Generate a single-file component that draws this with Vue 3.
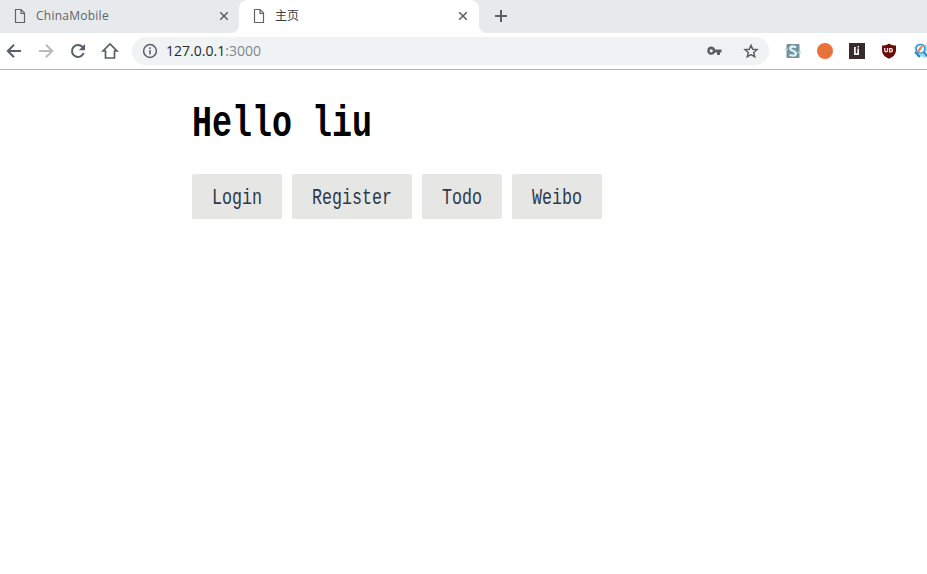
<script setup>
const links = ['Login', 'Register', 'Todo', 'Weibo']
const tabs = [
  { title: 'ChinaMobile', active: false },
  { title: '主页', active: true },
]
</script>

<template>
  <div class="browser">
    <div class="tabs">
      <div v-for="t in tabs" :key="t.title" class="tab" :class="{ active: t.active, idle: !t.active }">
        <svg class="doc" width="12" height="16" viewBox="0 0 12 16"><path d="M1.500 1.500h5.500l3.500 3.500v9.500h-9zM7 1.500v4h3.500" /></svg>
        <span class="title">{{ t.title }}</span>
        <svg class="close" width="10" height="10" viewBox="0 0 10 10"><path d="M1.200 1.200l7.600 7.600M8.800 1.200l-7.600 7.600" /></svg>
      </div>
      <div class="rest">
        <svg width="12" height="12" viewBox="0 0 12 12"><path d="M6 0v12M0 6h12" /></svg>
      </div>
    </div>

    <div class="toolbar">
      <div class="nav">
        <svg width="16" height="16" viewBox="0 0 16 16"><path d="M15 8H2M8 1.800L1.800 8L8 14.200" /></svg>
        <svg class="dim" width="16" height="16" viewBox="0 0 16 16"><path d="M1 8h13M8 1.800L14.200 8L8 14.200" /></svg>
        <svg width="16" height="16" viewBox="0 0 16 16"><path d="M13.600 10A6 6 0 1 1 12.300 3.800L13.500 5" /><path class="fill" d="M15 1v6.200H8.800z" /></svg>
        <svg width="18" height="18" viewBox="0 0 18 18"><path class="house" d="M4.500 9v7h9V9H16L9 2L2 9z" /></svg>
      </div>
      <div class="address">
        <svg class="info" width="16" height="16" viewBox="0 0 16 16"><circle cx="8" cy="8" r="6.400" /><path d="M8 7v4.500M8 4.300v1.700" /></svg>
        <span class="url">127.0.0.1<span class="port">:3000</span></span>
        <svg class="key" width="15" height="10" viewBox="0 0 15 10"><path fill-rule="evenodd" d="M4.200.6a4.100 4.100 0 0 1 3.900 2.800H14.500v3H13v2.500h-3V6.400H8.100A4.100 4.100 0 1 1 4.200.6zM4.200 3.200a1.600 1.600 0 1 0 0 3.200a1.600 1.600 0 0 0 0-3.200z" /></svg>
        <svg class="star" width="16" height="16" viewBox="0 0 16 16"><path d="M8 2.300l1.700 4 4.300.4-3.300 2.800 1 4.200L8 11.500l-3.700 2.200 1-4.200L2 6.700l4.300-.4z" /></svg>
      </div>
      <div class="extensions">
        <svg width="16" height="16" viewBox="0 0 16 16"><rect x="1.500" y="1" width="13" height="14" rx="1" fill="#78909c" /><path d="M0 6.500h3M12.500 9.500H16" stroke="#a9dce8" stroke-width="1.500" /><path d="M11 4.700C9.800 3 5.200 3 5.200 5.400C5.200 8 10.900 7.500 10.900 10.500C10.900 13.200 6.400 13.200 4.600 11.500" fill="none" stroke="#d4f5f8" stroke-width="2.300" /></svg>
        <svg width="16" height="16" viewBox="0 0 16 16"><circle cx="8" cy="8" r="8" fill="#ef6f3c" /><path d="M8 8C6.500 5.800 5.500 5.500 4.500 5.500a2.500 2.500 0 0 0 0 5C5.500 10.500 6.500 10 8 8s2.500-2.500 3.500-2.500a2.500 2.500 0 0 1 0 5C10.500 10.500 9.500 10.200 8 8z" fill="none" stroke="#d97935" stroke-width="1.500" /></svg>
        <svg width="16" height="16" viewBox="0 0 16 16"><rect width="16" height="16" fill="#392a2c" /><path d="M5 4h1.800v6.300H8.300V5.500H10V12H5zM8.500 3H10v1.400H8.500z" fill="#f1f1f1" /></svg>
        <svg width="16" height="16" viewBox="0 0 16 16"><path d="M8 0.500C10 2 12 2.500 15 2.500V7C15 11.500 12 14 8 15.800C4 14 1 11.500 1 7V2.500C4 2.500 6 2 8 .5z" fill="#690b08" /><path d="M3.700 5v2.500a1.400 1.400 0 0 0 2.800 0V5M8.700 5.700h1.600a1.700 1.700 0 0 1 0 3.200H8.700z" fill="none" stroke="#f4dddc" stroke-width="1.300" /></svg>
        <svg width="16" height="16" viewBox="0 0 16 16"><path d="M1 4L4 1l5 1 4-.5 2 3.500-2 4 2 4-3 2-4-2-4 1-1-4z" fill="#9bd9f2" /><circle cx="7.500" cy="5.800" r="4.300" fill="#e9f7fc" stroke="#3a8dc0" stroke-width="1.400" /><path d="M8.500 4l-3 4" stroke="#e58a4b" stroke-width="2.200" stroke-linecap="round" /><path d="M2 9l5 5M10.500 9l4 4.500" stroke="#2580b5" stroke-width="1.800" /></svg>
      </div>
    </div>

    <main>
      <h1><span class="narrow">Hello liu</span></h1>
      <nav class="links">
        <a v-for="l in links" :key="l" class="link"><span class="slot" :style="{ width: l.length * 10 + 'px' }"><span class="narrow">{{ l }}</span></span></a>
      </nav>
    </main>
  </div>
</template>

<style>
body {
  background: #fff;
  overflow: hidden;
}
</style>

<style scoped>
.browser {
  width: 927px;
  height: 574px;
  overflow: hidden;
  background: #fff;
}
svg {
  display: block;
  flex: none;
}
.tabs {
  display: flex;
  height: 33px;
  background: #fff;
}
.tab {
  box-sizing: border-box;
  display: flex;
  align-items: center;
  width: 239px;
  padding: 0 10px 1px 14px;
  font: 12px/32px "Open Sans", "Noto Sans CJK SC", sans-serif;
  color: #5f6368;
}
.idle {
  background: #e7eaed;
  border-bottom-right-radius: 8px;
}
.idle .title {
  letter-spacing: 0.250px;
}
.active {
  width: 240px;
  padding-right: 11px;
  color: #3c4043;
  position: relative;
  background: #fff;
}
.active::before,
.active::after {
  content: "";
  position: absolute;
  top: 0;
  width: 8px;
  height: 8px;
}
.active::before {
  left: 0;
  background: radial-gradient(circle at 100% 100%, #fff 7.500px, #e7eaed 8px);
}
.active::after {
  right: 0;
  background: radial-gradient(circle at 0 100%, #fff 7.500px, #e7eaed 8px);
}
.doc {
  fill: none;
  stroke: #5f6368;
  stroke-width: 1.200;
}
.title {
  flex: 1;
  padding-left: 10px;
}
.close {
  fill: none;
  stroke: #5f6368;
  stroke-width: 1.600;
}
.rest {
  flex: 1;
  display: flex;
  align-items: center;
  padding: 0 0 1px 16px;
  background: #e7eaed;
  border-bottom-left-radius: 8px;
}
.rest path {
  stroke: #5a5e66;
  stroke-width: 2;
}
.toolbar {
  box-sizing: border-box;
  display: flex;
  align-items: center;
  height: 37px;
  padding-left: 6px;
  border-bottom: 1px solid #b3b4b6;
}
.nav {
  display: flex;
  align-items: center;
  gap: 16px;
  width: 126px;
  flex: none;
}
.nav svg:last-child {
  margin-left: -1px;
}
.nav path {
  fill: none;
  stroke: #5a5e68;
  stroke-width: 2;
}
.nav .house {
  stroke-width: 1.700;
}
.nav .fill {
  fill: #5a5e68;
  stroke: none;
}
.nav .dim path {
  stroke: #b8babd;
}
.address {
  box-sizing: border-box;
  display: flex;
  align-items: center;
  flex: none;
  width: 637px;
  height: 28px;
  padding: 0 10px;
  border-radius: 14px;
  background: #f0f3f4;
}
.info,
.star {
  fill: none;
  stroke: #5a5e68;
  stroke-width: 1.500;
}
.url {
  flex: 1;
  padding-left: 8px;
  font: 14px/28px "Open Sans", sans-serif;
  letter-spacing: 0.020px;
  color: #27292c;
}
.port {
  color: #80868b;
}
.key {
  margin-right: 21px;
  fill: #5a5e68;
}
.extensions {
  display: flex;
  gap: 16px;
  padding-left: 16px;
}
main {
  padding: 30px 0 0 192px;
  font-family: "Liberation Mono", monospace;
}
h1 {
  width: 180px;
  margin: 0;
  font-size: 45px;
  line-height: 50px;
  color: #000;
}
.narrow {
  display: inline-block;
  transform: scaleX(0.7406);
  transform-origin: 0 50%;
  white-space: pre;
}
.links {
  display: flex;
  gap: 10px;
  margin-top: 24px;
}
.link {
  height: 45px;
  padding: 0 20px;
  border-radius: 2px;
  background: #e6e6e4;
  font-size: 22.500px;
  line-height: 48px;
  color: #2c394a;
}
.slot {
  display: block;
}
</style>
